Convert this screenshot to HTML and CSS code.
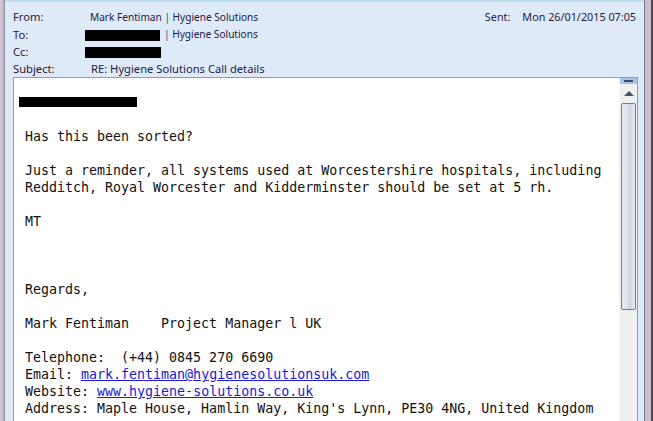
FILE: index.html
```html
<!DOCTYPE html>
<html>
<head>
<meta charset="utf-8">
<link rel="stylesheet" href="styles.css">
</head>
<body>
<div class="window">
  <div class="frame-left"></div>
  <div class="pane">
    <div class="header">
      <div class="row">
        <span class="label">From:</span>
        <span class="value name">Mark Fentiman <span class="sep">|</span> Hygiene Solutions</span>
        <span class="sent"><span class="sent-label">Sent:</span><span>Mon 26/01/2015 07:05</span></span>
      </div>
      <div class="row">
        <span class="label">To:</span>
        <span class="value name"><span class="redact redact-to"></span><span class="sep">|</span> Hygiene Solutions</span>
      </div>
      <div class="row">
        <span class="label">Cc:</span>
        <span class="value"><span class="redact redact-cc"></span></span>
      </div>
      <div class="row">
        <span class="label">Subject:</span>
        <span class="value subject">RE: Hygiene Solutions Call details</span>
      </div>
    </div>
    <div class="body-box">
      <div class="message">
        <div class="line"><span class="redact redact-body"></span></div>
        <div class="line"> </div>
        <div class="line">Has this been sorted?</div>
        <div class="line"> </div>
        <div class="line">Just a reminder, all systems used at Worcestershire hospitals, including</div>
        <div class="line">Redditch, Royal Worcester and Kidderminster should be set at 5 rh.</div>
        <div class="line"> </div>
        <div class="line">MT</div>
        <div class="line"> </div>
        <div class="line"> </div>
        <div class="line"> </div>
        <div class="line">Regards,</div>
        <div class="line"> </div>
        <div class="line">Mark Fentiman    Project Manager l UK</div>
        <div class="line"> </div>
        <div class="line">Telephone:  (+44) 0845 270 6690</div>
        <div class="line">Email: <a class="link" href="#">mark.fentiman@hygienesolutionsuk.com</a></div>
        <div class="line">Website: <a class="link" href="#">www.hygiene-solutions.co.uk</a></div>
        <div class="line">Address: Maple House, Hamlin Way, King's Lynn, PE30 4NG, United Kingdom</div>
      </div>
      <div class="scrollbar">
        <div class="sb-toggle"><span class="sb-dash"></span></div>
        <div class="sb-up"><span class="sb-arrow"></span></div>
        <div class="sb-thumb"></div>
        <div class="sb-track"></div>
      </div>
    </div>
  </div>
  <div class="frame-right"></div>
</div>
</body>
</html>
```

FILE: styles.css
```css
html, body {
  margin: 0;
  padding: 0;
  height: 100%;
  overflow: hidden;
}

.window {
  display: flex;
  height: 421px;
  overflow: hidden;
  background: #dfeaf9;
}

.frame-left {
  width: 4px;
  flex: none;
  background: linear-gradient(to right, #d6cad8, #c3b2c6);
  border-right: 1px solid #8e8e98;
}

.frame-right {
  width: 6px;
  flex: none;
  background: #cdbdd0;
  border-left: 1px solid #7e7e88;
  border-right: 2px solid #4a4a50;
}

.pane {
  flex: 1;
  display: flex;
  flex-direction: column;
  background: #dfeaf9;
  border-top: 2px solid #bfe0f2;
  padding: 6px 6px 0 8px;
  min-width: 0;
}

.header {
  display: flex;
  flex-direction: column;
  font-family: "Noto Sans", "Open Sans", sans-serif;
  font-size: 11.2px;
  color: #1d1d3a;
}

.row {
  display: flex;
  align-items: center;
  height: 17.35px;
  white-space: nowrap;
}

.label {
  width: 77px;
  flex: none;
  color: #1f2033;
}

.value {
  color: #1b1b45;
}

.name {
  font-size: 10.1px;
}

.sep {
  color: #34508c;
}

.subject {
  padding-left: 1px;
}

.sent {
  margin-left: auto;
  padding-right: 2px;
  display: flex;
  gap: 12px;
  font-size: 10.8px;
}

.redact {
  display: inline-block;
  background: #000;
  vertical-align: middle;
}

.redact-to {
  width: 75px;
  height: 11px;
  margin-left: -5px;
  margin-right: 4px;
}

.redact-cc {
  width: 76px;
  height: 11px;
  margin-left: -5px;
}

.body-box {
  flex: 1;
  display: flex;
  background: #fff;
  border: 1px solid #76a0d8;
  border-bottom: none;
  min-height: 0;
}

.message {
  flex: 1;
  padding: 16px 0 0 11px;
  font-family: "DejaVu Sans Mono", "Liberation Mono", monospace;
  font-size: 13.3px;
  line-height: 17px;
  color: #111;
  overflow: hidden;
}

.line {
  height: 17px;
  white-space: pre;
}

.redact-body {
  width: 118px;
  height: 10px;
  margin-left: -6px;
  vertical-align: 0;
}

.link {
  color: #1a1ad8;
  text-decoration: underline;
}

.scrollbar {
  width: 17px;
  flex: none;
  display: flex;
  flex-direction: column;
  background: #efefef;
  border-left: 1px solid #f6f6f6;
}

.sb-toggle {
  height: 6px;
  background: #a9c4ea;
  display: flex;
  justify-content: center;
  align-items: center;
}

.sb-dash {
  width: 9px;
  height: 2px;
  background: #3c4a66;
}

.sb-up {
  height: 19px;
  display: flex;
  justify-content: center;
  align-items: center;
  background: #f0f0f0;
}

.sb-arrow {
  width: 0;
  height: 0;
  border-left: 5px solid transparent;
  border-right: 5px solid transparent;
  border-bottom: 5px solid #47546e;
}

.sb-thumb {
  height: 205px;
  margin: 0 1px;
  border: 1px solid #6f7f9a;
  border-radius: 2px;
  background: linear-gradient(to right, #e4e8ee 0%, #dfe4ea 40%, #c8d3e0 55%, #d3dce6 75%, #e7ebf0 100%);
}

.sb-track {
  flex: 1;
  background: #efefef;
}
```
